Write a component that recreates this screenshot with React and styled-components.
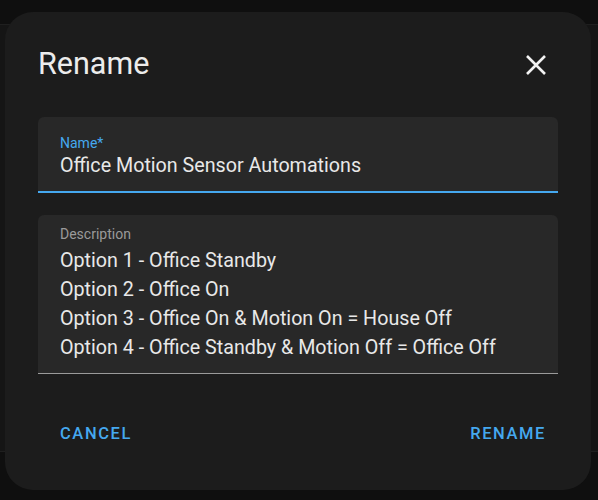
import React from "react";
import styled, { createGlobalStyle } from "styled-components";

const ACCENT = "#45a8ef";

const GlobalStyle = createGlobalStyle`
  html, body {
    margin: 0;
    padding: 0;
    background: #0f0f0f;
  }
  body {
    font-family: Roboto, "Noto Sans", sans-serif;
  }
`;

const Page = styled.div`
  position: relative;
  width: 598px;
  height: 500px;
  overflow: hidden;
  background: #0f0f0f;
`;

// the page that sits behind the modal
const Backdrop = styled.div`
  margin-top: 24px;
  height: 426px;
  border-top: 1px solid #1f1f1f;
  border-bottom: 1px solid #1f1f1f;
  background: #151515;
`;

const Dialog = styled.div`
  position: absolute;
  left: 5px;
  top: 12px;
  width: 586px;
  height: 478px;
  box-sizing: border-box;
  border-radius: 28px;
  background: #1c1c1c;
  padding: 0 33px;
  display: flex;
  flex-direction: column;
  color: #e3e3e3;
`;

const Header = styled.div`
  display: flex;
  align-items: center;
  justify-content: space-between;
  height: 105px;
`;

const Title = styled.h2`
  margin: 0;
  font-weight: 400;
  font-size: 30.5px;
  color: #ececec;
  padding-bottom: 3px;
`;

const CloseButton = styled.button`
  border: 0;
  background: none;
  padding: 0;
  width: 36px;
  height: 36px;
  margin-right: 4px;
  display: flex;
  align-items: center;
  justify-content: center;
  cursor: pointer;
`;

const Field = styled.div`
  background: #282828;
  border-radius: 6px 6px 0 0;
  padding: ${(p) => p.$pad};
  border-bottom: ${(p) => (p.$focused ? `2px solid ${ACCENT}` : "1px solid #9a9a9a")};
  margin-bottom: ${(p) => p.$gap || "0"};
`;

const Label = styled.div`
  font-size: 14px;
  line-height: 16px;
  color: ${(p) => (p.$focused ? ACCENT : "#9a9a9a")};
`;

const Lines = styled.div`
  margin-top: 4px;
`;

const Value = styled.div`
  font-size: 19.7px;
  line-height: 29px;
  color: #e8e8e8;
`;

const Actions = styled.div`
  display: flex;
  justify-content: space-between;
  margin-top: 44px;
  padding: 0 0 0 10px;
`;

const TextButton = styled.button`
  border: 0;
  background: none;
  padding: 6px 12px;
  font-family: Roboto, sans-serif;
  font-weight: 500;
  font-size: 16.5px;
  letter-spacing: 1.6px;
  color: ${ACCENT};
  cursor: pointer;
`;

const lines = [
  "Option 1 - Office Standby",
  "Option 2 - Office On",
  "Option 3 - Office On & Motion On = House Off",
  "Option 4 - Office Standby & Motion Off = Office Off",
];

export default function App() {
  return (
    <Page>
      <GlobalStyle />
      <Backdrop />
      <Dialog>
        <Header>
          <Title>Rename</Title>
          <CloseButton aria-label="Close">
            <svg width="22" height="22" viewBox="0 0 22 22">
              <path d="M2 2 L20 20 M20 2 L2 20" stroke="#f2f2f2" strokeWidth="2.6" />
            </svg>
          </CloseButton>
        </Header>
        <Field $focused $pad="18px 22px 11px" $gap="22px">
          <Label $focused>Name*</Label>
          <Value>Office Motion Sensor Automations</Value>
        </Field>
        <Field $pad="11px 22px 11px">
          <Label>Description</Label>
          <Lines>
            {lines.map((l) => (
              <Value key={l}>{l}</Value>
            ))}
          </Lines>
        </Field>
        <Actions>
          <TextButton>CANCEL</TextButton>
          <TextButton>RENAME</TextButton>
        </Actions>
      </Dialog>
    </Page>
  );
}
